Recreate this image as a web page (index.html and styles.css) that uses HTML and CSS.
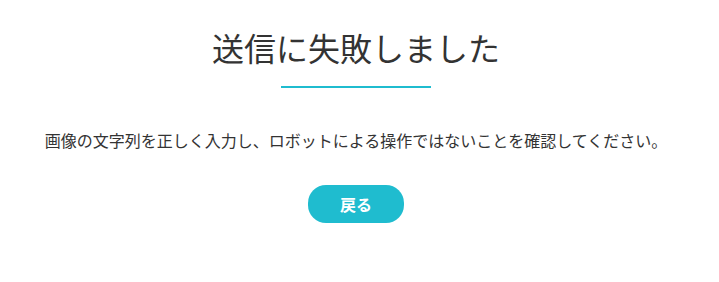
FILE: index.html
```html
<!DOCTYPE html>
<html lang="ja">
<head>
<meta charset="utf-8">
<link rel="stylesheet" href="styles.css">
</head>
<body>
<main class="page">
  <h1 class="title">送信に失敗しました</h1>
  <div class="rule"></div>
  <p class="message">画像の文字列を正しく入力し、ロボットによる操作ではないことを確認してください。</p>
  <a class="back" href="#">戻る</a>
</main>
</body>
</html>
```
FILE: styles.css
```css
html, body {
  margin: 0;
  padding: 0;
  background: #fff;
}
body {
  font-family: "Noto Sans CJK JP", "Noto Sans", sans-serif;
  color: #333;
}
.page {
  width: 712px;
  display: flex;
  flex-direction: column;
  align-items: center;
  padding-top: 25px;
}
.title {
  margin: 0;
  font-size: 32px;
  font-weight: 400;
  line-height: 44px;
  color: #333;
}
.rule {
  width: 150px;
  height: 2px;
  background: #1fbccf;
  margin-top: 17px;
}
.message {
  margin: 40px 0 0;
  font-size: 16px;
  line-height: 24px;
  color: #333;
}
.back {
  margin-top: 33px;
  width: 96px;
  height: 38px;
  border-radius: 18px;
  background: #1fbccf;
  color: #fff;
  font-size: 16px;
  font-weight: 700;
  text-decoration: none;
  display: flex;
  align-items: center;
  justify-content: center;
}
```
